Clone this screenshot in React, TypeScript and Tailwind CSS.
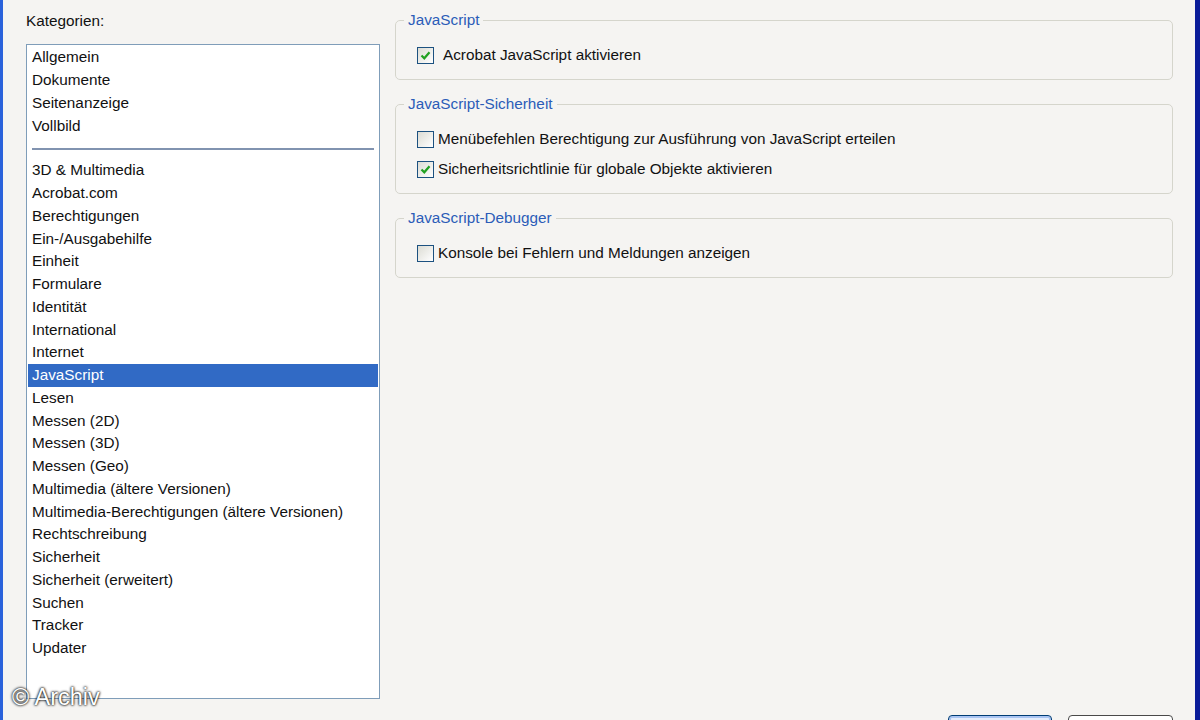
import React from "react";

const groupA = ["Allgemein", "Dokumente", "Seitenanzeige", "Vollbild"];
const groupB = [
  "3D & Multimedia",
  "Acrobat.com",
  "Berechtigungen",
  "Ein-/Ausgabehilfe",
  "Einheit",
  "Formulare",
  "Identität",
  "International",
  "Internet",
  "JavaScript",
  "Lesen",
  "Messen (2D)",
  "Messen (3D)",
  "Messen (Geo)",
  "Multimedia (ältere Versionen)",
  "Multimedia-Berechtigungen (ältere Versionen)",
  "Rechtschreibung",
  "Sicherheit",
  "Sicherheit (erweitert)",
  "Suchen",
  "Tracker",
  "Updater",
];

const Row = ({ label, selected }: { label: string; selected?: boolean }) => (
  <div
    className={`mx-[1px] flex h-[22.75px] items-center whitespace-nowrap pl-[4px] ${
      selected ? "bg-[#316ac5] text-white" : "text-[#111]"
    }`}
  >
    {label}
  </div>
);

const Checkbox = ({ checked }: { checked?: boolean }) => (
  <span className="flex h-[17px] w-[17px] shrink-0 items-center justify-center border border-[#1c5180] bg-gradient-to-br from-[#dcdcd4] to-white">
    {checked && (
      <svg width="11" height="11" viewBox="0 0 11 11">
        <path d="M1.5 5.5 L4.3 8.3 L9.5 2.2" fill="none" stroke="#21a121" strokeWidth="2.2" />
      </svg>
    )}
  </span>
);

const Option = ({ label, checked, gap = "gap-[4px]" }: { label: string; checked?: boolean; gap?: string }) => (
  <label className={`flex h-[20px] items-center ${gap} whitespace-nowrap text-[#111]`}>
    <Checkbox checked={checked} />
    <span>{label}</span>
  </label>
);

const Group = ({ title, children, className = "" }: { title: string; children: React.ReactNode; className?: string }) => (
  <fieldset className={`rounded-[5px] border border-[#d5d5cc] pl-[8px] ${className}`}>
    <legend className="h-[18px] px-[4px] leading-[18px] text-[#2b5cb8]">{title}</legend>
    {children}
  </fieldset>
);

export default function App() {
  return (
    <div
      className="relative flex h-[720px] w-[1200px] overflow-hidden border-l-[3px] border-r-[5px] border-l-[#2a62db] border-r-[#0a1c99] bg-[#f5f4f2] text-[15.3px]"
      style={{ fontFamily: '"Liberation Sans", Arial, sans-serif' }}
    >
      {/* Kategorien */}
      <div className="ml-[23px] flex w-[354px] shrink-0 flex-col">
        <div className="mt-[12px] h-[18px] leading-[18px] text-[#111]">Kategorien:</div>
        <div className="mt-[14px] h-[655px] border border-[#7f9db9] bg-white pt-[1.5px]">
          {groupA.map((l) => (
            <Row key={l} label={l} />
          ))}
          <div className="flex h-[22px] items-center px-[5px]">
            <div className="h-[2px] w-full bg-[#8193b0]" />
          </div>
          {groupB.map((l) => (
            <Row key={l} label={l} selected={l === "JavaScript"} />
          ))}
        </div>
      </div>

      {/* Einstellungen */}
      <div className="ml-[15px] mr-[22px] flex flex-1 flex-col">
        <Group title="JavaScript" className="mt-[11px] pb-[14px]">
          <div className="pl-[13px] pt-[16px]">
            <Option label="Acrobat JavaScript aktivieren" checked gap="gap-[9px]" />
          </div>
        </Group>
        <Group title="JavaScript-Sicherheit" className="mt-[15px] pb-[14px]">
          <div className="flex flex-col gap-[10px] pl-[13px] pt-[16px]">
            <Option label="Menübefehlen Berechtigung zur Ausführung von JavaScript erteilen" />
            <Option label="Sicherheitsrichtlinie für globale Objekte aktivieren" checked />
          </div>
        </Group>
        <Group title="JavaScript-Debugger" className="mt-[15px] pb-[14px]">
          <div className="pl-[13px] pt-[16px]">
            <Option label="Konsole bei Fehlern und Meldungen anzeigen" />
          </div>
        </Group>

        <div className="flex-1" />
        <div className="flex h-[5px] shrink-0 justify-end gap-[16px]">
          <button className="h-[24px] w-[104px] shrink-0 rounded-[4px] border border-[#003c74] bg-[#e4ecfb] shadow-[inset_0_0_0_2px_#a9c4f2]" />
          <button className="h-[24px] w-[105px] shrink-0 rounded-[4px] border border-[#4a4a4a] bg-white" />
        </div>
      </div>

      {/* Wasserzeichen */}
      <div className="absolute left-[9px] top-[684px] text-[23.5px] leading-[26px] text-white [text-shadow:0_0_3px_#000,0_0_2px_#000]">
        © Archiv
      </div>
    </div>
  );
}
